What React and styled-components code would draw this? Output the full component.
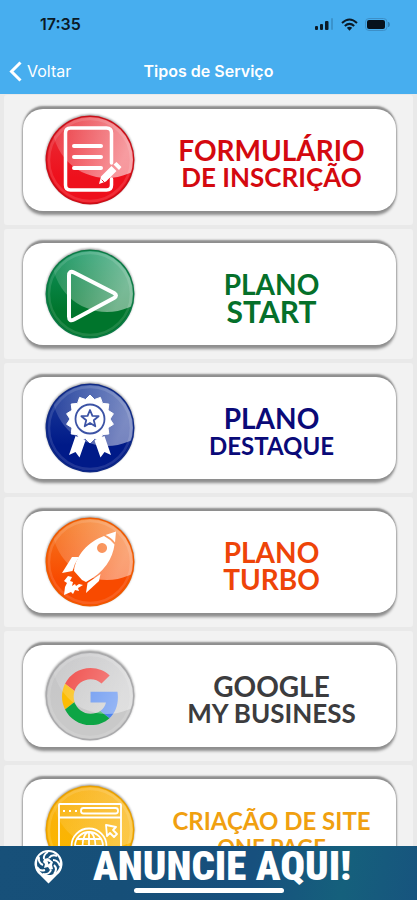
import React from 'react';
import styled, { createGlobalStyle } from 'styled-components';

const GlobalStyle = createGlobalStyle`
  * {
    box-sizing: border-box;
  }

  body {
    margin: 0;
    background: #e9e9e9;
    font-family: Inter, "Liberation Sans", sans-serif;
  }
`;

const Screen = styled.div`
  display: flex;
  flex-direction: column;
  height: 100vh;
  overflow: hidden;
`;

const Header = styled.header`
  flex: none;
  background: #47aeef;
`;

const StatusBar = styled.div`
  display: flex;
  align-items: center;
  justify-content: space-between;
  height: 48px;
  padding: 0 26px 0 40px;
  color: #0b1a26;
  font-size: 16px;
  font-weight: 600;
`;

const StatusIcons = styled.div`
  display: flex;
  align-items: center;
  gap: 7px;
`;

const NavBar = styled.nav`
  display: grid;
  grid-template-columns: 1fr auto 1fr;
  align-items: center;
  height: 46px;
  padding: 0 9px;
  color: #fff;
`;

const BackButton = styled.button`
  display: flex;
  align-items: center;
  justify-self: start;
  gap: 5px;
  padding: 0;
  border: 0;
  background: none;
  color: inherit;
  font-family: inherit;
  font-size: 16px;
  cursor: pointer;
`;

const Title = styled.h1`
  margin: 0;
  font-size: 16px;
  font-weight: 600;
`;

const ServiceList = styled.ul`
  flex: 1;
  min-height: 0;
  display: flex;
  flex-direction: column;
  gap: 4px;
  margin: 0;
  padding: 1px 4px 0;
  overflow: hidden;
  list-style: none;
`;

const ServiceItem = styled.li`
  flex: none;
  padding: 14px 17px 14px 19px;
  border-radius: 3px;
  background: #f2f2f2;
`;

const ServiceCard = styled.button`
  display: flex;
  align-items: center;
  width: 100%;
  height: 102px;
  padding: 0 0 0 22px;
  border: 0;
  border-radius: 20px;
  background: #fff;
  box-shadow:
    0 -4px 2px -1px #8e8e8e,
    0 5px 3px -1px #8e8e8e,
    0 0 2px 1px #a8a8a8;
  cursor: pointer;
`;

const Badge = styled.svg`
  flex: none;
  width: 90px;
  height: 90px;
  overflow: visible;
  filter: drop-shadow(0 -1px 1px rgba(0, 0, 0, 0.4));
`;

const Label = styled.span`
  flex: 1;
  display: flex;
  flex-direction: column;
  align-items: center;
  padding: 8px 0 0 12px;
  color: ${props => props.$color};
  font-family: Lato, "Liberation Sans", sans-serif;
  font-weight: 700;
  line-height: 27px;
  white-space: nowrap;
`;

const Line = styled.span`
  font-size: ${props => props.$size}px;
`;

const Banner = styled.a`
  flex: none;
  display: flex;
  align-items: flex-start;
  gap: 30px;
  height: 54px;
  padding: 3px 34px 0;
  background: linear-gradient(100deg, #175079 0%, #164f78 30%, #17507e 60%, #15607c 82%, #17547e 100%);
  color: #fff;
  text-decoration: none;
`;

const PinLogo = styled.svg`
  flex: none;
  width: 29px;
  height: 35px;
`;

const BannerText = styled.span`
  display: flex;
  flex-direction: column;
  font-family: "Roboto Condensed", Roboto, "Liberation Sans", sans-serif;
  font-size: 41px;
  font-weight: 900;
  line-height: 34px;
  white-space: nowrap;

  &::after {
    content: '';
    width: 150px;
    height: 5px;
    margin: 5px 0 0 41px;
    border-radius: 3px;
    background: #fff;
  }
`;

const FormIcon = () => (
  <g fill="none" stroke="#fff" strokeLinecap="round">
    <path
      d="M66.500 48V18q0-5-5-5H25.500q-5 0-5 5V70q0 5 5 5H61.500q5 0 5-5V64"
      strokeWidth="3.500"
    />
    <path d="M29 31H56M29 42H56M29 53H56" strokeWidth="4" />
    <path d="M54 69l2-7.500 10.500-10.500 5 5-10.500 10.500zM68.500 49.500l3-2.500 5 5-2.500 3z" fill="#fff" stroke="none" />
    <path d="M57 65l2 2" stroke="#e32a35" strokeWidth="1" />
  </g>
);

const PlayIcon = () => (
  <path
    d="M24 27q0-6 5-3.500L69 44q4 2.500 0 5L29 70.500q-5 2.500-5-3z"
    fill="none"
    stroke="#fff"
    strokeWidth="4"
    strokeLinejoin="round"
  />
);

const starPoints = (cx, cy, outer, inner, count) =>
  Array.from({ length: count * 2 }, (_, i) => {
    const r = i % 2 ? inner : outer;
    const a = (i * Math.PI) / count - Math.PI / 2;
    return `${(cx + r * Math.cos(a)).toFixed(1)},${(cy + r * Math.sin(a)).toFixed(1)}`;
  }).join(' ');

const MedalIcon = () => (
  <g>
    <g fill="#fff">
      <path d="M30.500 53l10 4.500-6 17-4-5.500-6.500 3z" />
      <path d="M59.500 53l-10 4.500 6 17 4-5.500 6.500 3z" />
      <polygon points={starPoints(45, 36, 24, 20, 14)} stroke="#fff" strokeWidth="1" strokeLinejoin="round" />
    </g>
    <g fill="none" stroke="#3c53a5" strokeWidth="1.800">
      <circle cx="45" cy="36" r="14.500" />
      <polygon points={starPoints(45, 36, 9, 4, 5)} strokeLinejoin="round" />
    </g>
  </g>
);

const RocketIcon = () => (
  <g fill="#fff">
    <path d="M71 14.500l-10.500 3.500q6 2.500 9.500 7.500z" />
    <path
      fillRule="evenodd"
      d="M59 19q6 3 10.500 8.500C68 41 59 56 41 65L37 63 29 54C31 38 43 25 59 19zM57 26a5 5 0 1 0 .1 0z"
    />
    <path d="M27 40h7q-5 7-6.500 14L17 56z" />
    <path d="M55.500 57l-1.500 7L41 76l1.500-10z" />
    <path d="M23 59l-4 5 3 2-2 4-1 8 7-3 2 2 2-4 4 1-1-3 5-3-4-1-3 2-1-2-3 2 1-4-3-1 2-4z" />
  </g>
);

const GoogleIcon = () => (
  <g transform="translate(17 17) scale(1.190)">
    <path fill="#ee3b38" d="M24 9.500c3.540 0 6.710 1.220 9.210 3.600l6.850-6.850C35.900 2.380 30.470 0 24 0 14.620 0 6.510 5.380 2.560 13.220l7.980 6.190C12.430 13.720 17.740 9.500 24 9.500z" />
    <path fill="#4e84ee" d="M46.980 24.550c0-1.570-.15-3.090-.38-4.550H24v9.020h12.940c-.58 2.960-2.260 5.480-4.780 7.180l7.730 6c4.510-4.180 7.090-10.360 7.090-17.650z" />
    <path fill="#fbbc05" d="M10.530 28.590c-.48-1.450-.76-2.990-.76-4.590s.27-3.140.76-4.590l-7.980-6.190C.92 16.460 0 20.120 0 24c0 3.880.92 7.540 2.560 10.780l7.970-6.190z" />
    <path fill="#0da545" d="M24 48c6.480 0 11.930-2.130 15.890-5.810l-7.730-6c-2.150 1.450-4.920 2.300-8.160 2.300-6.260 0-11.570-4.220-13.470-9.910l-7.980 6.190C6.510 42.620 14.620 48 24 48z" />
  </g>
);

const SiteIcon = () => (
  <g fill="none" stroke="#fff" strokeWidth="1.800">
    <rect x="14" y="19" width="62" height="56" rx="1" />
    <path d="M14 32.500H76" />
    <rect x="36" y="23" width="37" height="5.500" rx="2.500" />
    <path d="M18 26h2M24 26h2M30 26h2" />
    <circle cx="44" cy="61" r="17.500" />
    <circle cx="44" cy="61" r="14" />
    <ellipse cx="44" cy="61" rx="6.500" ry="14" />
    <path d="M44 47v28M32 54H56M30 61H58" />
    <path d="M61 40l10 2-3 3 4 4-3 3-4-4-3 3z" strokeLinejoin="round" />
  </g>
);

const services = [
  {
    id: 'form',
    color: '#d4090f',
    tones: ['#e8323a', '#ee101c', '#c80f18'],
    gloss: 0.56,
    Icon: FormIcon,
    lines: [['FORMULÁRIO', 28], ['DE INSCRIÇÃO', 26]],
  },
  {
    id: 'start',
    color: '#05702a',
    tones: ['#10945f', '#00752c', '#0b7a45'],
    gloss: 0.46,
    Icon: PlayIcon,
    lines: [['PLANO', 28], ['START', 30]],
  },
  {
    id: 'destaque',
    color: '#0a0a78',
    tones: ['#1f3f9c', '#001a88', '#102a85'],
    gloss: 0.46,
    Icon: MedalIcon,
    lines: [['PLANO', 28], ['DESTAQUE', 24]],
  },
  {
    id: 'turbo',
    color: '#ee4408',
    tones: ['#f57a20', '#f84a00', '#ef5a00'],
    gloss: 0.44,
    Icon: RocketIcon,
    lines: [['PLANO', 28], ['TURBO', 28]],
  },
  {
    id: 'google',
    color: '#3c3c3e',
    tones: ['#c4c4c6', '#c9c9c9', '#aaaaac'],
    gloss: 0.4,
    Icon: GoogleIcon,
    glossOnTop: true,
    lines: [['GOOGLE', 28], ['MY BUSINESS', 26]],
  },
  {
    id: 'site',
    color: '#f0a010',
    tones: ['#f9b112', '#fbb500', '#e9a000'],
    gloss: 0.26,
    Icon: SiteIcon,
    lines: [['CRIAÇÃO DE SITE', 24], ['ONE PAGE', 22]],
  },
];

function GlossyBadge({ service }) {
  const { id, tones, gloss, Icon, glossOnTop } = service;
  const shine = (
    <g clipPath={`url(#disc-${id})`}>
      <circle cx="62" cy="8" r="55" fill={`url(#shine-${id})`} />
    </g>
  );

  return (
    <Badge viewBox="0 0 90 90" aria-hidden="true">
      <defs>
        <linearGradient id={`tone-${id}`} x1="0" y1="0" x2="0" y2="1">
          <stop offset="0" stopColor={tones[0]} />
          <stop offset="0.700" stopColor={tones[1]} />
          <stop offset="1" stopColor={tones[1]} />
        </linearGradient>
        <linearGradient id={`shine-${id}`} gradientUnits="userSpaceOnUse" x1="12" y1="20" x2="75" y2="50">
          <stop offset="0" stopColor="#fff" stopOpacity={gloss / 4} />
          <stop offset="1" stopColor="#fff" stopOpacity={gloss} />
        </linearGradient>
        <clipPath id={`disc-${id}`}>
          <circle cx="45" cy="45" r="43" />
        </clipPath>
      </defs>
      <circle cx="45" cy="45" r="44.500" fill={tones[2]} />
      <circle cx="45" cy="45" r="43" fill={`url(#tone-${id})`} />
      <circle cx="45" cy="45" r="41" fill="none" stroke="#fff" strokeOpacity="0.120" strokeWidth="2.500" />
      {!glossOnTop && shine}
      <Icon />
      {glossOnTop && shine}
    </Badge>
  );
}

function Business() {
  return (
    <Screen>
      <GlobalStyle />
      <Header>
        <StatusBar>
          <span>17:35</span>
          <StatusIcons>
            <svg width="19" height="12" viewBox="0 0 19 12" aria-hidden="true">
              <g fill="#0b1a26">
                <rect x="0" y="8" width="3" height="4" rx="1" />
                <rect x="5" y="6" width="3" height="6" rx="1" />
                <rect x="10" y="3" width="3.500" height="9" rx="1" />
              </g>
              <rect x="16" y="0" width="2" height="12" rx="1" fill="#3a93cd" />
            </svg>
            <svg width="17" height="13" viewBox="0 0 17 13" aria-hidden="true">
              <g fill="none" stroke="#0b1a26" strokeWidth="2">
                <path d="M1 5q7.500-7 15 0" />
                <path d="M3.800 8q4.700-4.300 9.400 0" />
              </g>
              <path d="M5.800 9.800q2.700-2 5.400 0L8.500 12.800z" fill="#0b1a26" />
            </svg>
            <svg width="26" height="13" viewBox="0 0 26 13" aria-hidden="true">
              <rect x="0.500" y="0.500" width="21.500" height="12" rx="3.500" fill="none" stroke="#3c8fc8" />
              <rect x="2" y="2" width="18" height="9" rx="2" fill="#06111c" />
              <path d="M23.500 4v5q2-2.500 0-5z" fill="#2f7fb4" stroke="#2f7fb4" />
            </svg>
          </StatusIcons>
        </StatusBar>
        <NavBar>
          <BackButton type="button">
            <svg width="13" height="21" viewBox="0 0 13 21" aria-hidden="true">
              <path d="M11.500 1.500L2.500 10.500L11.500 19.500" fill="none" stroke="#fff" strokeWidth="3" />
            </svg>
            Voltar
          </BackButton>
          <Title>Tipos de Serviço</Title>
        </NavBar>
      </Header>

      <ServiceList>
        {services.map(service => (
          <ServiceItem key={service.id}>
            <ServiceCard type="button">
              <GlossyBadge service={service} />
              <Label $color={service.color}>
                {service.lines.map(([text, size]) => (
                  <Line key={text} $size={size}>{text}</Line>
                ))}
              </Label>
            </ServiceCard>
          </ServiceItem>
        ))}
      </ServiceList>

      <Banner href="#">
        <PinLogo viewBox="0 0 29 35" aria-hidden="true">
          <path d="M14.500 34.500L6 26A14 14 0 1 1 23 26z" fill="#fff" />
          <circle cx="14.500" cy="14.500" r="11.500" fill="#17507a" />
          <g fill="none" stroke="#fff" strokeWidth="2">
            <path d="M14 3q-5 3-4 7M23 7q-5-2-8 2M26 17q-2-6-7-6M20 25q4-5 0-9M9 25q6 1 8-4M3 18q3 5 8 3M5 8q-1 6 4 8" />
          </g>
          <path d="M10 10l4-1 5 4-1 3 1 4-3 1-2-3-4 1 1-4-2-2z" fill="#fff" />
          <path d="M13.500 12l3 1.500-2 2z" fill="#17507a" />
        </PinLogo>
        <BannerText>ANUNCIE AQUI!</BannerText>
      </Banner>
    </Screen>
  );
}

export default Business;
